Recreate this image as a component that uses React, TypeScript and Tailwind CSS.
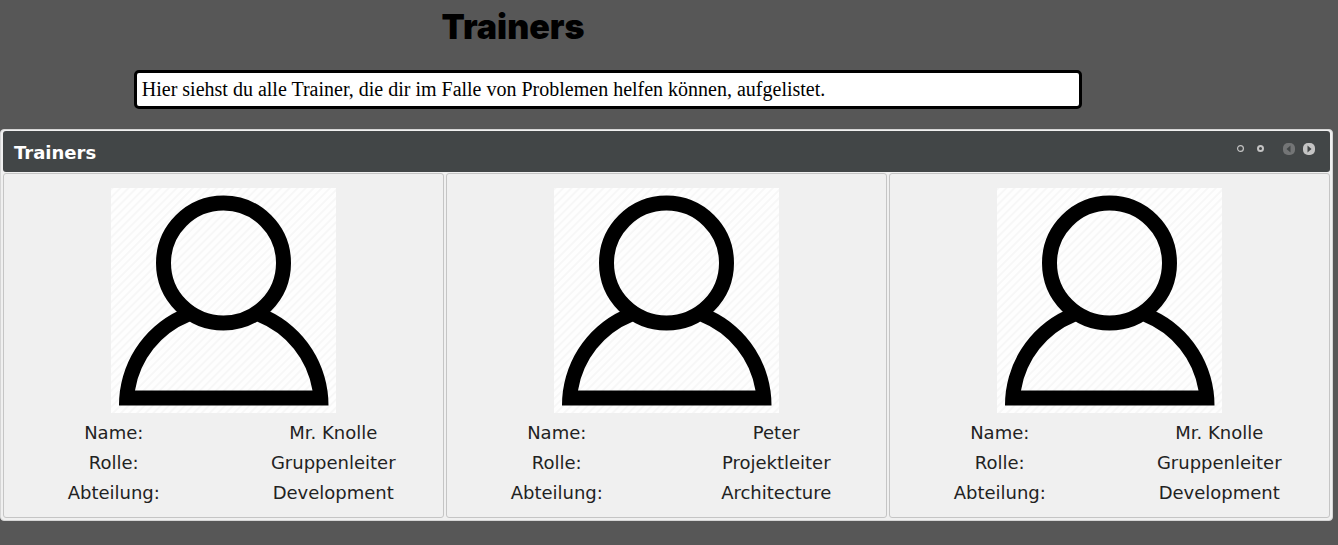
type Trainer = { name: string; role: string; department: string };

const trainers: Trainer[] = [
  { name: "Mr. Knolle", role: "Gruppenleiter", department: "Development" },
  { name: "Peter", role: "Projektleiter", department: "Architecture" },
  { name: "Mr. Knolle", role: "Gruppenleiter", department: "Development" },
];

function Avatar({ id }: { id: string }) {
  return (
    <svg viewBox="0 0 225 225" className="mx-auto block size-[225px]" role="img" aria-label="Trainer">
      <defs>
        <pattern id={id} width="5.7" height="5.7" patternUnits="userSpaceOnUse" patternTransform="rotate(45)">
          <rect width="5.7" height="5.7" fill="#fefefe" />
          <rect width="1.8" height="5.7" fill="#f7f7f7" />
        </pattern>
      </defs>
      <rect width="225" height="225" fill={`url(#${id})`} />
      <circle cx="112.5" cy="75" r="60" fill="none" stroke="#000" strokeWidth="15" />
      <path d="M68 122.500A104.500 104.500 0 0 0 8 217.500H217.500A104.500 104.500 0 0 0 157 122.500L146 133.500A90 90 0 0 1 201.500 202.500H24A90 90 0 0 1 79 133.500Q88 127 82 118Z" />
    </svg>
  );
}

function TrainerCard({ trainer, id }: { trainer: Trainer; id: string }) {
  const rows = [
    ["Name:", trainer.name],
    ["Rolle:", trainer.role],
    ["Abteilung:", trainer.department],
  ];
  return (
    <li className="min-w-0 flex-1 rounded-[3px] border border-[#c5c5c5] bg-[#f0f0f0] pt-3.5 pb-[9px]">
      <Avatar id={id} />
      <table className="mt-[5px] w-full table-fixed text-center text-[18px] leading-[30px] text-[#222222]">
        <tbody>
          {rows.map(([label, value]) => (
            <tr key={label}>
              <th scope="row" className="p-0 font-normal">{label}</th>
              <td className="p-0">{value}</td>
            </tr>
          ))}
        </tbody>
      </table>
    </li>
  );
}

export default function App() {
  return (
    <main className="min-h-screen bg-[#575757] pt-1">
      <h1 className="ml-[33%] font-['Inter',sans-serif] text-[34px] leading-[46px] font-black text-black">
        Trainers
      </h1>
      <p className="mt-5 mr-64 ml-[10%] rounded-[5px] border-3 border-black bg-white px-[5px] py-1 font-['Liberation_Serif',serif] text-[20px] leading-[25px] text-black">
        Hier siehst du alle Trainer, die dir im Falle von Problemen helfen können, aufgelistet.
      </p>
      <section
        aria-label="Trainers"
        className="mt-5 mr-[5px] rounded-[4px] border border-[#d5d5d5] bg-[#f0f0f0] px-0.5 pt-px pb-0.5 font-['DejaVu_Sans',sans-serif]"
      >
        <header className="flex h-[41px] items-center justify-between rounded-[3px] bg-[#424647] pr-[15px] pl-[11px]">
          <h2 className="pt-0.5 text-[18px] leading-6 font-bold text-white">Trainers</h2>
          <nav aria-label="Trainer pages" className="flex items-center pb-1.5">
            <button type="button" aria-label="Page 1" className="mr-[13px]">
              <svg viewBox="0 0 7 7" className="block size-[7px]">
                <circle cx="3.500" cy="3.500" r="2.900" fill="none" stroke="#c4c4c4" strokeWidth="1.200" />
              </svg>
            </button>
            <button type="button" aria-label="Page 2" className="mr-[19px]">
              <svg viewBox="0 0 7 7" className="block size-[7px]">
                <circle cx="3.500" cy="3.500" r="2.500" fill="none" stroke="#c4c4c4" strokeWidth="2" />
              </svg>
            </button>
            <button type="button" aria-label="Previous" disabled className="mr-2">
              <svg viewBox="0 0 12 12" className="block size-3">
                <rect width="12" height="12" rx="5" fill="#737576" />
                <path d="M7.500 2.500v7L3.500 6Z" fill="#424647" />
              </svg>
            </button>
            <button type="button" aria-label="Next">
              <svg viewBox="0 0 12 12" className="block size-3">
                <rect width="12" height="12" rx="5" fill="#c4c4c4" />
                <path d="M4.500 2.500v7L8.500 6Z" fill="#424647" />
              </svg>
            </button>
          </nav>
        </header>
        <ul className="mt-px flex gap-0.5">
          {trainers.map((trainer, index) => (
            <TrainerCard key={index} trainer={trainer} id={`stripes-${index}`} />
          ))}
        </ul>
      </section>
    </main>
  );
}
